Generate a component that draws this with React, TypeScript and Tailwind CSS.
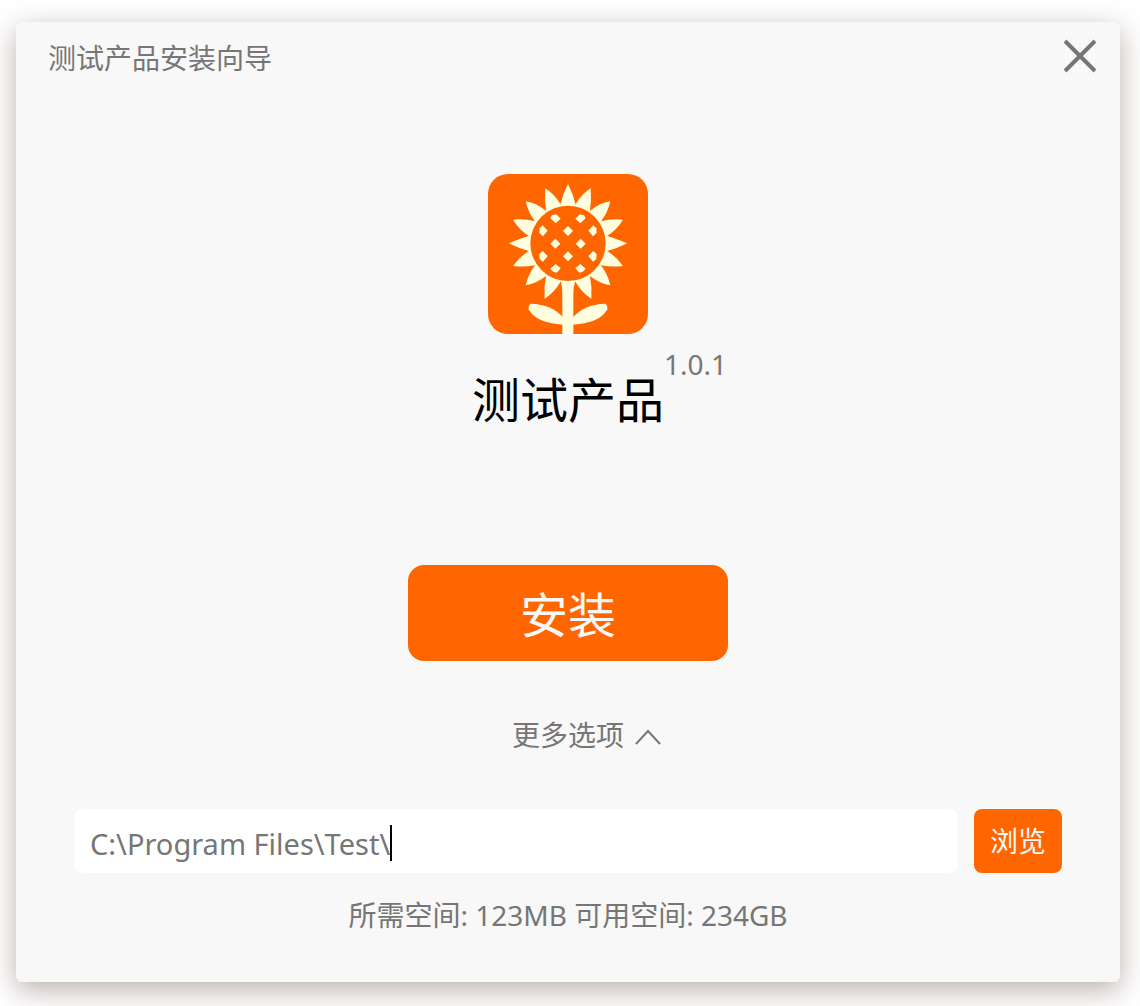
import { useState } from "react";

const halfPetals = [
  "M284 120L287 114Q305 84 332 67Q335 100 330 135L326 139Z",
  "M326 137L331 134Q357 112 391 106Q384 138 364 165L359 169Z",
  "M359 168L365 165Q395 158 429 161Q411 191 382 209L376 212Z",
  "M377 209L382 210Q412 219 442 232Q412 247 382 255L377 256Z",
  "M376 253L382 256Q411 273 429 300Q395 304 364 298L359 296Z",
  "M359 295L364 299Q384 326 391 358Q357 352 331 331L326 327Z",
  "M326 325L330 331Q337 364 334 398Q305 380 287 348L284 343Z",
];

const edgeSeeds = [
  "M286 158L299 145L312 148L317 157L301 172Z",
  "M325 194L340 178L349 187L350 200L339 211Z",
  "M325 270L340 255L350 265L349 279L339 287Z",
  "M286 307L301 294L317 308L308 317L298 320Z",
];

const seeds = [
  [264, 195],
  [226, 233],
  [302, 233],
  [264, 271],
];

function SunflowerHalf() {
  return (
    <>
      {halfPetals.map((d) => (
        <path key={d} d={d} />
      ))}
      <path d="M278 455Q312 415 375 413Q383 415 382 430Q360 472 278 476Z" />
    </>
  );
}

function SunflowerLogo() {
  return (
    <svg viewBox="24 24 480 480" className="size-40 rounded-[20px] bg-[#ff6600]" fill="#ffffe0" role="img" aria-label="测试产品">
      <SunflowerHalf />
      <g transform="translate(528 0) scale(-1 1)">
        <SunflowerHalf />
      </g>
      <path d="M241 119V116Q249 82 264 54Q279 82 287 116V119Z" />
      <path d="M242 345H286Q280 362 280 380V504H247V380Q247 362 242 345Z" />
      <circle cx="264" cy="232" r="118" />
      <circle cx="264" cy="232" r="113" fill="#ff6600" />
      {seeds.map(([x, y]) => (
        <path key={`${x}-${y}`} d={`M${x} ${y - 15}l15 15l-15 15l-15 -15Z`} />
      ))}
      {edgeSeeds.map((d) => (
        <g key={d}>
          <path d={d} />
          <path d={d} transform="translate(528 0) scale(-1 1)" />
        </g>
      ))}
    </svg>
  );
}

export default function App() {
  const [path, setPath] = useState("C:\\Program Files\\Test\\");

  return (
    <div className="flex min-h-screen bg-white pt-[22px] pr-5 pb-6 pl-4 font-['Noto_Sans','Noto_Sans_CJK_SC',sans-serif] text-[28px] leading-9 text-[#767676]">
      <main className="flex flex-1 flex-col rounded-md bg-[#f8f8f8] shadow-[0_8px_28px_rgba(60,35,25,0.36)]">
        <header className="flex items-start justify-between pt-3.5 pr-5 pl-8">
          <h1 className="pt-1">测试产品安装向导</h1>
          <button type="button" aria-label="关闭" className="flex size-10 items-center justify-center">
            <svg viewBox="0 0 34 34" className="size-[34px]" fill="none" stroke="#767676" strokeWidth="4">
              <path d="M2 2L32 32M32 2L2 32" />
            </svg>
          </button>
        </header>

        <section className="mt-[98px] flex flex-col items-center">
          <SunflowerLogo />
          <div className="relative mt-[30px]">
            <h2 className="text-5xl leading-[72px] text-black">测试产品</h2>
            <span className="absolute -top-[18px] left-full">1.0.1</span>
          </div>
          <button type="button" className="mt-[129px] h-24 w-80 rounded-2xl bg-[#ff6600] pt-1 text-5xl text-[#f8f8f8]">
            安装
          </button>
          <button type="button" className="relative mt-14 leading-9">
            更多选项
            <svg viewBox="0 0 26 16" className="absolute top-3 left-full ml-[11px] h-4 w-[26px]" fill="none" stroke="#767676" strokeWidth="2">
              <path d="M1 15L13 2L25 15" />
            </svg>
          </button>
        </section>

        <section className="mt-14 px-[58px]">
          <div className="flex gap-4">
            <div className="flex h-16 flex-1 items-center rounded-lg bg-white px-4 pt-1">
              <input
                type="text"
                aria-label="安装路径"
                value={path}
                onChange={(event) => setPath(event.target.value)}
                className="field-sizing-content h-10 text-[29px] caret-transparent outline-none"
              />
              <span className="h-9 w-0.5 bg-black" />
            </div>
            <button type="button" className="h-16 w-[88px] rounded-lg bg-[#ff6600] text-[#f8f8f8]">
              浏览
            </button>
          </div>
          <p className="mt-6 text-center">所需空间: 123MB 可用空间: 234GB</p>
        </section>
      </main>
    </div>
  );
}
